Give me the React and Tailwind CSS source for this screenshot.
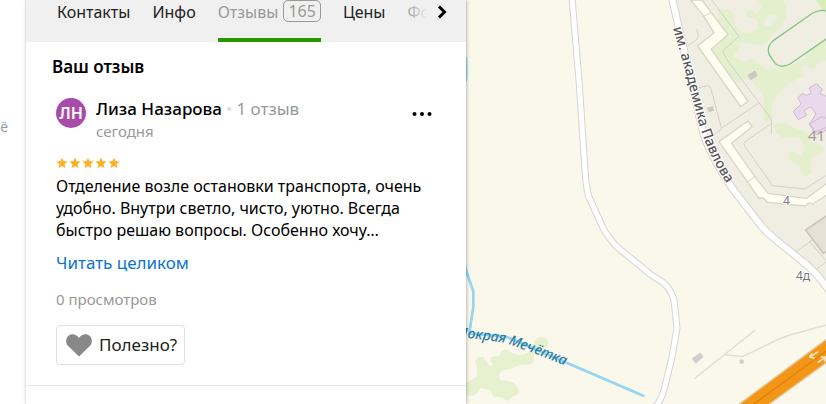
import { useState } from "react";

const TABS = [
  { id: "contacts", label: "Контакты" },
  { id: "info", label: "Инфо" },
  { id: "reviews", label: "Отзывы", count: 165 },
  { id: "prices", label: "Цены" },
  { id: "photo", label: "Фото" },
];

const REVIEW = {
  author: "Лиза Назарова",
  initials: "ЛН",
  total: "1 отзыв",
  date: "сегодня",
  rating: 5,
  text: "Отделение возле остановки транспорта, очень удобно. Внутри светло, чисто, уютно. Всегда быстро решаю вопросы. Особенно хочу…",
  views: "0 просмотров",
};

function Star() {
  return (
    <svg viewBox="0 0 12 12" className="h-3 w-3" fill="#ffb020" aria-hidden="true">
      <path d="M6 .4 7.500 4.300l4.100.3-3.100 2.600 1 4.100L6 9.100l-3.500 2.200 1-4.100L.4 4.600l4.100-.3z" />
    </svg>
  );
}

function Tabs({ active, onSelect }) {
  return (
    <nav className="relative overflow-hidden bg-[#f0f0f0]">
      <div className="flex h-[42px] gap-[22px] pl-[31px]">
        {TABS.map((tab) => {
          const isActive = tab.id === active;
          return (
            <button
              key={tab.id}
              type="button"
              onClick={() => onSelect(tab.id)}
              className={`flex shrink-0 items-start gap-[5px] border-b-4 text-base leading-6 ${
                isActive ? "border-[#2a9600] text-[#999]" : "border-transparent text-[#222]"
              }`}
            >
              {tab.label}
              {tab.count && (
                <span className="rounded-[5px] border border-[#999] px-1 leading-5">{tab.count}</span>
              )}
            </button>
          );
        })}
      </div>
      <button
        type="button"
        aria-label="Дальше"
        className="absolute inset-y-0 right-0 flex w-16 items-start justify-end bg-linear-to-r from-[#f0f0f0]/50 to-[#f0f0f0] to-40% pt-[5px] pr-[18px]"
      >
        <svg viewBox="0 0 12 14" className="h-[14px] w-3" fill="none" stroke="#000" strokeWidth="3" aria-hidden="true">
          <path d="M3 1.5 8.5 7 3 12.5" />
        </svg>
      </button>
    </nav>
  );
}

function Review({ review }) {
  return (
    <article className="border-b border-[#e5e5e5] px-[30px] pt-5 pb-5">
      <header className="flex items-start gap-[10px]">
        <div className="flex h-[30px] w-[30px] items-center justify-center rounded-full bg-[#a94ba8] text-base font-semibold text-white">
          {review.initials}
        </div>
        <div className="flex-1">
          <div className="text-[17px] leading-[22px]">
            <span className="font-medium">{review.author}</span>
            <span className="mx-1 text-[#dcdee3]">•</span>
            <span className="text-[#999]">{review.total}</span>
          </div>
          <div className="text-[15px] leading-[22px] text-[#999]">{review.date}</div>
        </div>
        <button type="button" aria-label="Ещё" className="pt-[14px] pr-1">
          <svg viewBox="0 0 20 4" className="h-1 w-5" aria-hidden="true">
            <circle cx="2.5" cy="2" r="2" />
            <circle cx="10" cy="2" r="2" />
            <circle cx="17.5" cy="2" r="2" />
          </svg>
        </button>
      </header>
      <div className="mt-[15px] flex gap-px" role="img" aria-label="Оценка 5 из 5">
        {Array.from({ length: review.rating }, (_, i) => (
          <Star key={i} />
        ))}
      </div>
      <p className="mt-[6px] text-base leading-[22px]">{review.text}</p>
      <a href="#full" className="mt-[11px] block text-[17px] leading-[22px] text-[#0b74cf]">
        Читать целиком
      </a>
      <div className="mt-[14px] text-[15px] leading-[22px] text-[#999]">{review.views}</div>
      <button
        type="button"
        className="mt-[15px] flex h-10 items-center gap-[7px] rounded-[4px] border border-[#e0e0e0] pr-[7px] pl-[9px] text-[17px] text-[#222]"
      >
        <svg viewBox="0 0 26 23" className="h-[23px] w-[26px]" fill="#888" aria-hidden="true">
          <path d="M13 22.5 2.2 12.1C-.6 9.2-.4 4.500 2.200 2.100 5.200-.6 10-.3 13 4c3-4.300 7.800-4.600 10.800-1.900 2.600 2.400 2.800 7.100 0 10z" />
        </svg>
        Полезно?
      </button>
    </article>
  );
}

// Each group holds one map tile, drawn at three units to the pixel
function CityMap() {
  return (
    <svg
      viewBox="0 0 360 404"
      preserveAspectRatio="xMinYMin slice"
      className="absolute inset-0 h-full w-full"
      role="img"
      aria-label="Карта"
    >
      <defs>
        <path id="street" d="M207 28 217 63 233 124Q241 153 264 189L300 234" />
        <path id="river" d="M-11 337Q15 339 39 343Q72 354 112 371" />
        <path id="lane" d="M106-2 113 80 119 170Q120 188 123 197L137 228Q140 234 150 246L184 274 190 278Q204 285 208 300L211 328 206 357 198 390Q196 398 189 408" />
        <path id="avenue" d="M206-2 211 20 218 50 236 128Q241 150 266 188L293 223Q298 230 310 240L336 261Q352 273 366 295" />
      </defs>
      <rect width="360" height="404" fill="#faf8ea" />
      <path d="M206 0 211 20 218 50 236 130 246 157 266 188 296 225 344 268 364 290V0z" fill="#f0eee3" />

      <g transform="translate(174 0) scale(.33333)" strokeLinejoin="round" strokeLinecap="round">
        <path
          fill="#e4efcd"
          d="M232 30Q245 22 265 30 290 42 280 70 300 95 320 100L345 92Q365 80 345 55L320 50Q310 32 335 30L350 40 365 20 355 0H430Q448 30 435 60 425 85 395 105 385 130 365 137 335 130 297 128 305 150 280 165 300 190 325 180 345 170 365 200 390 215 405 205L430 200 465 192 495 175Q505 150 530 130L545 105 560 118V180L530 190 525 205 510 208 495 195 480 205 495 228 465 240 430 265Q400 285 393 335L398 358Q390 375 372 360 368 320 372 290 350 260 330 235L305 238Q300 255 290 250L215 148 262 104 235 65z"
        />
        <path d="M528 0H560V40Q540 25 528 0z" fill="#d9edb9" />
        <ellipse cx="391" cy="61" rx="22" ry="14" transform="rotate(-38 391 61)" fill="#f0eee3" />
        <path d="M560 33Q540 27 518 39L400 122Q378 140 388 165L404 188Q420 207 450 192L560 116z" fill="#f0eee3" stroke="#86c684" strokeWidth="4" />
        <path fill="none" stroke="#d2d0ca" strokeWidth="3" d="M215 0 297 110 247 153 262 180 392 355Q398 363 394 376V400M170 87Q180 115 168 120L145 136M172 264 205 257Q212 258 214 270L244 385 355 310M215 410 244 387" />
        <path fill="#fffdf0" stroke="#d9d6c8" strokeWidth="4" d="M152 0 192 50 222 98 173 138 302 320 324 304 214 148 264 104 214 38 186 0z" />
        <path fill="none" stroke="#d9d6c8" strokeWidth="3" d="M192 49 214 37" />
        <path fill="#ccc9c5" d="M325 226 344 213 352 226 333 239z M204 324 218 320 221 331 207 335z" stroke="#ccc9c5" strokeWidth="3" />
        <path
          fill="#e9d9ec"
          stroke="#cfb8d4"
          strokeWidth="3"
          d="M560 290 540 280 547 268 530 251 507 264 514 279 500 287 487 280 474 293 484 312 460 335 475 359 500 346 492 332 513 320 528 342 508 373 530 405 560 390z"
        />
      </g>

      <g transform="translate(174 120) scale(.33333)" strokeLinejoin="round" strokeLinecap="round">
        <path d="M400 18Q425 0 445 15L480 30Q510 30 510 65L545 75Q560 90 545 100L515 115Q510 130 515 155 495 180 483 155 485 135 455 125 435 100 455 92L482 105Q500 80 478 55 455 45 435 55 405 45 400 18z" fill="#e4efcd" />
        <path fill="none" stroke="#d2d0ca" strokeWidth="3" d="M395 10 315 65Q308 70 315 80L398 197 495 207 560 165M465 397 560 330M510 365 556 420M525 450 560 425" />
        <path fill="#fffdf0" stroke="#d9d6c8" strokeWidth="4" d="M315 9 237 65 357 235Q370 228 382 247L496 258Q505 245 518 252L560 225V190L500 235 384 220 346 172 275 70 336 20 324 3z" />
        <path fill="none" stroke="#d9d6c8" strokeWidth="3" d="M324 184 346 171" />
        <path fill="#e6e1d5" stroke="#cbc5bb" strokeWidth="5" d="M565 284 497 330 550 400 565 392z" />
        <path d="M510 12 545-10 560-5V22L527 35z" fill="#e9d9ec" stroke="#cfb8d4" strokeWidth="3" />
      </g>

      <g transform="translate(-16 240) scale(.33333)">
        <path
          fill="#e7f1cf"
          d="M76 365Q78 348 100 352L118 378 130 375Q115 360 125 350L148 348Q150 326 172 330 190 345 215 345 245 335 250 320 250 294 272 290 295 292 295 315 290 325 255 335L248 370Q230 378 215 373L180 388Q150 390 148 405L150 420 185 425Q200 430 208 455L200 465 188 468Q180 482 172 482L155 472 130 470 122 450 90 445Q80 470 60 467L40 465 46 430 80 410 82 385z"
        />
        <path fill="none" stroke="#93d5f3" strokeWidth="8" d="M40 50 48 90 70 155V200L58 280 168 290 580 467" strokeLinejoin="round" strokeLinecap="round" />
      </g>
      <path d="M0 57Q1 70 0 82" fill="none" stroke="#93d5f3" strokeWidth="2" />

      <g transform="translate(174 260) scale(.33333)">
        <path fill="none" stroke="#dfddd3" strokeWidth="4" d="M163 356 345 211M253 284 308 290 400 245Q420 235 450 225L560 195" />
        <path fill="#d0cfcd" stroke="#d0cfcd" strokeWidth="4" strokeLinejoin="round" d="M158 296 181 281 188 291 167 308z" />
        <circle cx="305" cy="305" r="7" fill="#d0cfcd" />
        <path fill="#f39617" stroke="#dfc9a0" strokeWidth="4" d="M290 438 570 230V300L380 438z" />
        <path stroke="#dd820c" strokeWidth="4" d="M338 435 570 265" />
        <path fill="none" stroke="#fde3b8" strokeWidth="5" d="M535 275 510 291M516 279 510 291 525 295M533 308 556 292M542 291 558 291 553 305" />
      </g>

      <g fill="none" strokeLinejoin="round">
        <use href="#lane" stroke="#d6d5d0" strokeWidth="7" />
        <use href="#lane" stroke="#fff" strokeWidth="5" />
        <use href="#avenue" stroke="#d6d5d0" strokeWidth="8" />
        <use href="#avenue" stroke="#fff" strokeWidth="6" />
      </g>

      <g stroke="#fff" strokeWidth="2" paintOrder="stroke" strokeLinejoin="round">
        <text fill="#555" fontSize="14" fontWeight="500">
          <textPath href="#street">им. академика Павлова</textPath>
        </text>
        <text fill="#2b7ba6" stroke="none" fontSize="14" fontStyle="italic" fontWeight="500">
          <textPath href="#river">Мокрая Мечётка</textPath>
        </text>
        <text x="317" y="205" fill="#777" fontSize="12">4</text>
        <text x="330" y="280" fill="#777" fontSize="12">4д</text>
        <text x="342" y="141" fill="#a69a90" stroke="none" fontSize="15">41</text>
      </g>
    </svg>
  );
}

export default function App() {
  const [active, setActive] = useState("reviews");

  return (
    <div className="flex min-h-screen bg-white font-['Noto_Sans','Open_Sans',sans-serif] text-black">
      <aside className="w-[25px] shrink-0 overflow-hidden pt-[117px] text-sm text-[#929daf]">
        <span className="flex w-2 justify-end">всё</span>
      </aside>
      <main className="z-10 w-[441px] shrink-0 border-l border-[#e8e8e8] bg-white shadow-[1px_0_3px_rgba(0,0,0,0.25)]">
        <Tabs active={active} onSelect={setActive} />
        <h2 className="px-[26px] pt-[14px] text-[17px] leading-[22px] font-semibold">Ваш отзыв</h2>
        <Review review={REVIEW} />
      </main>
      <section className="relative min-w-0 flex-1 overflow-hidden">
        <CityMap />
      </section>
    </div>
  );
}
